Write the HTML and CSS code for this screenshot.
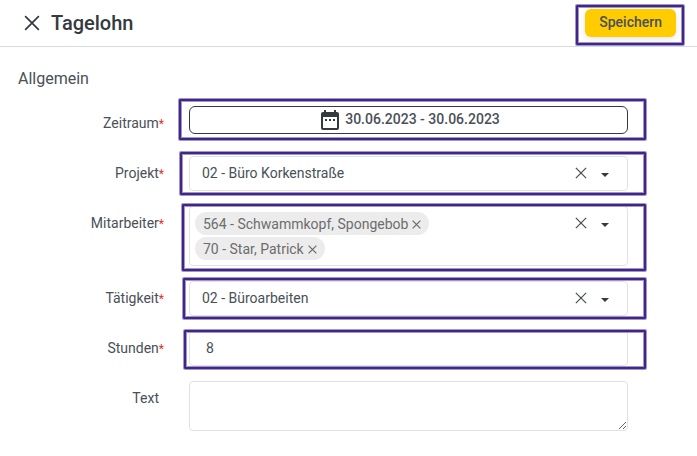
FILE: index.html
```html
<!DOCTYPE html>
<html lang="de">
<head>
<meta charset="utf-8">
<meta name="viewport" content="width=device-width, initial-scale=1">
<title>Tagelohn</title>
<link rel="stylesheet" href="styles.css">
</head>
<body>
<svg class="sprite" aria-hidden="true">
  <symbol id="x" viewBox="0 0 14 14"><path d="M1 1 13 13M13 1 1 13" fill="none" stroke="currentColor"/></symbol>
  <symbol id="caret" viewBox="0 0 8 4"><path d="M0 0H8L4 4Z" fill="currentColor"/></symbol>
</svg>
<form class="dialog">
  <header class="topbar">
    <button class="icon-button close" type="button" aria-label="Schließen"><svg><use href="#x"/></svg></button>
    <h1>Tagelohn</h1>
    <div class="marked marked-save"><button class="save" type="submit">Speichern</button></div>
  </header>
  <main>
    <h2>Allgemein</h2>
    <div class="row">
      <label for="zeitraum">Zeitraum<span class="req">*</span></label>
      <div class="marked marked-period">
        <button class="period" id="zeitraum" type="button">
          <svg viewBox="0 0 18 20" aria-hidden="true"><path fill="currentColor" fill-rule="evenodd" d="M3 0H5V2H13V0H15V2H16Q18 2 18 4V18Q18 20 16 20H2Q0 20 0 18V4Q0 2 2 2H3ZM2 7V18H16V7ZM4 9H6V11H4ZM8 9H10V11H8ZM12 9H14V11H12Z"/></svg>
          <span>30.06.2023 - 30.06.2023</span>
        </button>
      </div>
    </div>
    <div class="row">
      <label for="projekt">Projekt<span class="req">*</span></label>
      <div class="marked marked-project">
        <div class="box">
          <select id="projekt"><option>02 - Büro Korkenstraße</option></select>
          <button class="icon-button clear" type="button" aria-label="Projekt leeren"><svg><use href="#x"/></svg></button>
          <svg class="caret" aria-hidden="true"><use href="#caret"/></svg>
        </div>
      </div>
    </div>
    <div class="row">
      <label for="mitarbeiter">Mitarbeiter<span class="req">*</span></label>
      <div class="marked marked-staff">
        <div class="box">
          <ul class="chips">
            <li>564 - Schwammkopf, Spongebob<button class="icon-button remove" type="button" aria-label="Schwammkopf entfernen"><svg><use href="#x"/></svg></button></li>
            <li>70 - Star, Patrick<button class="icon-button remove" type="button" aria-label="Star entfernen"><svg><use href="#x"/></svg></button></li>
          </ul>
          <button class="icon-button clear" type="button" aria-label="Mitarbeiter leeren"><svg><use href="#x"/></svg></button>
          <button class="icon-button open" id="mitarbeiter" type="button"><svg class="caret"><use href="#caret"/></svg></button>
        </div>
      </div>
    </div>
    <div class="row">
      <label for="taetigkeit">Tätigkeit<span class="req">*</span></label>
      <div class="marked marked-task">
        <div class="box">
          <select id="taetigkeit"><option>02 - Büroarbeiten</option></select>
          <button class="icon-button clear" type="button" aria-label="Tätigkeit leeren"><svg><use href="#x"/></svg></button>
          <svg class="caret" aria-hidden="true"><use href="#caret"/></svg>
        </div>
      </div>
    </div>
    <div class="row">
      <label for="stunden">Stunden<span class="req">*</span></label>
      <div class="marked marked-hours"><input class="box" id="stunden" type="text" inputmode="decimal" value="8"></div>
    </div>
    <div class="row">
      <label class="optional" for="text">Text</label>
      <textarea class="box" id="text"></textarea>
    </div>
  </main>
</form>
</body>
</html>
```

FILE: styles.css
```css
* { box-sizing: border-box; }

body {
  margin: 0;
  background: #fff;
  color: #495057;
  font: 14px/20px Roboto, sans-serif;
}

button, input, select, textarea { font: inherit; color: inherit; }
button { cursor: pointer; }
.sprite { position: absolute; width: 0; height: 0; }

.icon-button {
  display: flex;
  align-items: center;
  justify-content: center;
  padding: 0;
  border: 0;
  background: none;
}

/* Top bar */
.topbar {
  display: flex;
  align-items: center;
  height: 47px;
  padding: 0 21px 0 24px;
  border-bottom: 1px solid #d9dae3;
}
.close { color: #343a40; }
.close svg { width: 16px; height: 16px; stroke-width: 1.5; }
h1 {
  flex: 1;
  margin: 0 0 0 11px;
  color: #343a40;
  font-size: 20px;
  font-weight: 500;
}
.save {
  display: block;
  height: 28px;
  padding: 0 14px 2px;
  border: 0;
  border-radius: 6px;
  background: #fc0;
  box-shadow: 0 2px 6px #0000001a;
  color: #495057;
  font-weight: 500;
}

/* Form rows */
main { padding: 22px 69px 24px 18px; }
h2 {
  margin: 0 0 17px;
  color: #495057;
  font-size: 16px;
  font-weight: 400;
}
.row {
  display: grid;
  grid-template-columns: 146px minmax(0, 1fr);
  column-gap: 25px;
  align-items: start;
  margin-bottom: 15px;
}
.row label { line-height: 35px; text-align: right; }
.req { color: #e03126; font-size: 12px; line-height: 1; }
.optional { padding-right: 5px; }

.box {
  display: flex;
  align-items: flex-start;
  width: 100%;
  min-height: 35px;
  border: 1px solid #e2e2e4;
  border-radius: 4px;
  background: #fff;
}
input.box { padding: 0 16px 2px; }
textarea.box { display: block; height: 50px; padding: 8px 12px; resize: vertical; }
select {
  flex: 1;
  min-width: 0;
  height: 33px;
  padding: 0 12px 2px;
  border: 0;
  background: none;
  appearance: none;
}
.clear { width: 20px; height: 33px; padding-bottom: 2px; color: #495057; }
.clear svg { width: 12px; height: 12px; stroke-width: 1.5; }
.caret { width: 8px; height: 4px; margin: 16px 18px 0 10px; color: #343a40; }
.open { align-items: flex-start; }

.period {
  display: flex;
  align-items: center;
  justify-content: center;
  gap: 6px;
  width: 100%;
  height: 28px;
  padding: 0 0 0 4px;
  border: 1px solid #343a40;
  border-radius: 6px;
  background: #fff;
  font-weight: 500;
}
.period span { padding-bottom: 2px; }
.period svg { width: 18px; height: 20px; color: #343a40; }

.chips {
  display: flex;
  flex: 1;
  flex-direction: column;
  align-items: flex-start;
  gap: 2px;
  min-width: 0;
  margin: 0;
  padding: 5px;
  list-style: none;
}
.chips li {
  display: flex;
  align-items: center;
  gap: 4px;
  height: 23px;
  padding: 0 8px;
  border-radius: 12px;
  background: #ececec;
  color: #6c6c6c;
}
.remove { padding-top: 2px; }
.remove svg { width: 9px; height: 9px; stroke-width: 2; }

/* Highlight frames drawn over the controls */
.marked { position: relative; }
.marked::after {
  content: "";
  position: absolute;
  border: 2px solid #3f2785;
  border-radius: 1px;
  box-shadow: 0 0 0 1px #a395c9, inset 0 0 0 1px #a395c9;
  pointer-events: none;
}
.marked-save::after { inset: -4px -8px -8px -9px; }
.marked-period::after { inset: -7px -18px -6px -10px; }
.marked-project::after { inset: -4px -18px -4px -9px; }
.marked-staff::after { inset: -2px -18px -5px -7px; }
.marked-task::after { inset: -3px -18px -3px -6px; }
.marked-hours::after { inset: -1px -18px -3px -5px; }
```
